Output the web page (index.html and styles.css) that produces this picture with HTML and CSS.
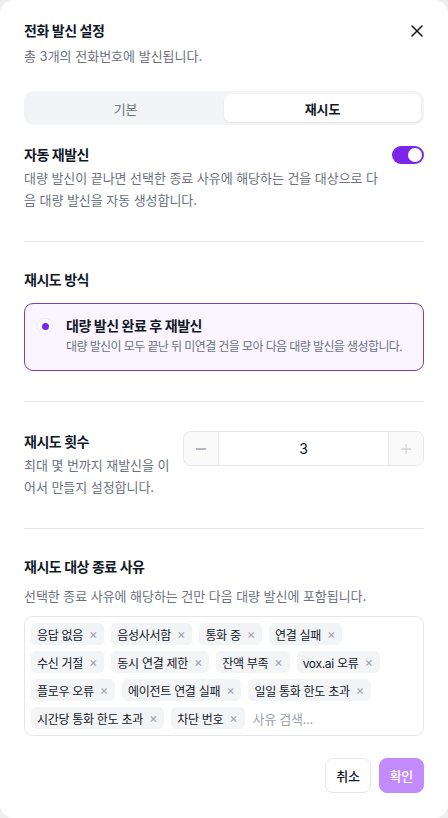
FILE: index.html
```html
<!DOCTYPE html>
<html lang="ko">
<head>
<meta charset="utf-8">
<link rel="stylesheet" href="styles.css">
</head>
<body>
<div class="modal">
  <div class="header">
    <div class="header-text">
      <div class="title">전화 발신 설정</div>
      <div class="subtitle">총 3개의 전화번호에 발신됩니다.</div>
    </div>
    <button class="close" aria-label="닫기">
      <svg width="14" height="14" viewBox="0 0 14 14"><path d="M2 2 L12 12 M12 2 L2 12" stroke="#111" stroke-width="1.5" stroke-linecap="round"/></svg>
    </button>
  </div>

  <div class="tabs">
    <div class="tab">기본</div>
    <div class="tab active">재시도</div>
  </div>

  <section class="section first">
    <div class="row-between">
      <div class="col">
        <div class="label">자동 재발신</div>
        <div class="desc">대량 발신이 끝나면 선택한 종료 사유에 해당하는 건을 대상으로 다음 대량 발신을 자동 생성합니다.</div>
      </div>
      <div class="toggle"><span class="knob"></span></div>
    </div>
  </section>

  <section class="section">
    <div class="label">재시도 방식</div>
    <div class="radio-card">
      <span class="radio"><span class="dot"></span></span>
      <div class="radio-text">
        <div class="radio-title">대량 발신 완료 후 재발신</div>
        <div class="radio-desc">대량 발신이 모두 끝난 뒤 미연결 건을 모아 다음 대량 발신을 생성합니다.</div>
      </div>
    </div>
  </section>

  <section class="section">
    <div class="row-count">
      <div class="col narrow">
        <div class="label">재시도 횟수</div>
        <div class="desc">최대 몇 번까지 재발신을 이어서 만들지 설정합니다.</div>
      </div>
      <div class="stepper">
        <span class="step minus"><svg width="12" height="12" viewBox="0 0 12 12"><path d="M1 6 H11" stroke="#9ca3af" stroke-width="1.4"/></svg></span>
        <span class="value">3</span>
        <span class="step plus"><svg width="12" height="12" viewBox="0 0 12 12"><path d="M1 6 H11 M6 1 V11" stroke="#d1d5db" stroke-width="1.4"/></svg></span>
      </div>
    </div>
  </section>

  <section class="section last">
    <div class="label">재시도 대상 종료 사유</div>
    <div class="desc sub">선택한 종료 사유에 해당하는 건만 다음 대량 발신에 포함됩니다.</div>
    <div class="tagbox">
      <span class="tag">응답 없음<i>×</i></span>
      <span class="tag">음성사서함<i>×</i></span>
      <span class="tag">통화 중<i>×</i></span>
      <span class="tag">연결 실패<i>×</i></span>
      <span class="tag">수신 거절<i>×</i></span>
      <span class="tag">동시 연결 제한<i>×</i></span>
      <span class="tag">잔액 부족<i>×</i></span>
      <span class="tag">vox.ai 오류<i>×</i></span>
      <span class="tag">플로우 오류<i>×</i></span>
      <span class="tag">에이전트 연결 실패<i>×</i></span>
      <span class="tag">일일 통화 한도 초과<i>×</i></span>
      <span class="tag">시간당 통화 한도 초과<i>×</i></span>
      <span class="tag">차단 번호<i>×</i></span>
      <span class="search">사유 검색...</span>
    </div>
  </section>

  <div class="footer">
    <button class="btn cancel">취소</button>
    <button class="btn confirm">확인</button>
  </div>
</div>
</body>
</html>
```

FILE: styles.css
```css
* { box-sizing: border-box; }
html, body { margin: 0; padding: 0; }
body {
  background: #efefef;
  font-family: "Inter", "Noto Sans CJK KR", sans-serif;
  color: #111827;
  width: 448px;
  height: 818px;
  overflow: hidden;
}
.modal {
  width: 448px;
  height: 818px;
  background: #fff;
  border-radius: 14px;
  padding: 21px 24px 25px;
  display: flex;
  flex-direction: column;
}
.header {
  display: flex;
  justify-content: space-between;
  align-items: flex-start;
}
.title {
  font-size: 14px;
  line-height: 20px;
  font-weight: 600;
  letter-spacing: -0.5px;
}
.subtitle {
  margin-top: 5px;
  font-size: 13px;
  line-height: 20px;
  color: #6b7280;
  letter-spacing: 0;
}
.close {
  border: 0;
  background: none;
  padding: 0;
  margin: 3px 0 0 0;
  width: 14px;
  height: 14px;
  display: flex;
  align-items: center;
  justify-content: center;
}
.tabs {
  margin-top: 25px;
  height: 34px;
  background: #f3f4f6;
  border-radius: 9px;
  padding: 3px;
  display: grid;
  grid-template-columns: 1fr 1fr;
}
.tab {
  display: flex;
  align-items: center;
  justify-content: center;
  font-size: 13px;
  color: #6b7280;
  border-radius: 7px;
  letter-spacing: -0.2px;
}
.tab.active {
  background: #fff;
  color: #111827;
  font-weight: 600;
  box-shadow: 0 1px 2px rgba(0,0,0,0.08);
}
.section {
  padding: 28px 0 30px;
  border-bottom: 1px solid #e5e7eb;
}
.section.first { padding-top: 20px; }
.section.last { border-bottom: 0; padding-bottom: 0; padding-top: 28px; }
.row-between {
  display: flex;
  justify-content: space-between;
  align-items: flex-start;
  gap: 10px;
}
.col { flex: 1; max-width: 358px; }
.label {
  font-size: 14px;
  line-height: 20px;
  font-weight: 600;
  letter-spacing: -0.5px;
}
.desc {
  margin-top: 2px;
  font-size: 13px;
  line-height: 22px;
  color: #6b7280;
  letter-spacing: -0.05px;
}
.desc.sub { margin-top: 8px; }
.toggle {
  width: 32px;
  height: 18px;
  border-radius: 9px;
  background: #7b26e8;
  position: relative;
  margin-top: 1px;
  flex: none;
}
.knob {
  position: absolute;
  right: 2px;
  top: 2px;
  width: 14px;
  height: 14px;
  border-radius: 50%;
  background: #fff;
}
.radio-card {
  margin-top: 13px;
  border: 1px solid #7e3fb0;
  background: #faf5ff;
  border-radius: 9px;
  padding: 12px 12px 14px 12px;
  display: flex;
  align-items: flex-start;
  gap: 13px;
}
.radio {
  width: 16px;
  height: 16px;
  border-radius: 50%;
  background: #fff;
  border: 1px solid #f0e8fb;
  display: flex;
  align-items: center;
  justify-content: center;
  margin-top: 2px;
  flex: none;
}
.dot {
  width: 7px;
  height: 7px;
  border-radius: 50%;
  background: #7b26e8;
}
.radio-title {
  font-size: 14px;
  line-height: 20px;
  font-weight: 600;
  letter-spacing: -0.5px;
}
.radio-desc {
  margin-top: 2px;
  font-size: 12px;
  line-height: 18px;
  color: #6b7280;
  letter-spacing: -0.6px;
  white-space: nowrap;
}
.row-count {
  display: flex;
  gap: 11px;
  align-items: flex-start;
}
.col.narrow { flex: none; width: 148px; padding-top: 2px; }
.stepper {
  flex: 1;
  height: 35px;
  margin-top: 1px;
  border: 1px solid #e5e7eb;
  border-radius: 8px;
  display: flex;
  overflow: hidden;
}
.step {
  width: 35px;
  flex: none;
  background: #fafafa;
  display: flex;
  align-items: center;
  justify-content: center;
}
.step.minus { border-right: 1px solid #e5e7eb; }
.step.plus { border-left: 1px solid #e5e7eb; }
.value {
  flex: 1;
  display: flex;
  align-items: center;
  justify-content: center;
  font-size: 14px;
  color: #111827;
}
.tagbox {
  margin-top: 9px;
  border: 1px solid #e5e7eb;
  border-radius: 9px;
  padding: 6px;
  display: flex;
  flex-wrap: wrap;
  gap: 6px 7px;
}
.tag {
  height: 22px;
  background: #f3f4f6;
  border-radius: 5px;
  padding: 0 7px 0 6px;
  display: inline-flex;
  align-items: center;
  font-size: 12px;
  color: #111827;
  letter-spacing: -0.3px;
}
.tag i {
  font-style: normal;
  color: #9ca3af;
  font-size: 13px;
  margin-left: 6px;
}
.search {
  height: 22px;
  display: inline-flex;
  align-items: center;
  font-size: 13px;
  color: #9ca3af;
  margin-left: 1px;
  letter-spacing: -0.3px;
}
.footer {
  margin-top: auto;
  display: flex;
  justify-content: flex-end;
  gap: 8px;
}
.btn {
  height: 35px;
  border-radius: 8px;
  font-family: inherit;
  font-size: 13px;
  padding: 0 10px;
  font-weight: 500;
  letter-spacing: -0.3px;
}
.btn.cancel {
  background: #fff;
  border: 1px solid #e5e7eb;
  color: #111827;
}
.btn.confirm {
  background: #c28afb;
  border: 1px solid #c28afb;
  color: #fff;
}
```
